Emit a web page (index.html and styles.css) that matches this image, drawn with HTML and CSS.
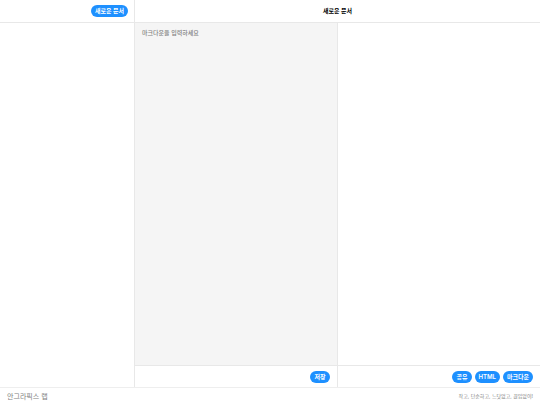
FILE: index.html
```
<!DOCTYPE html>
<html lang="ko">
<head>
    <meta charset="UTF-8">
    <meta name="viewport" content="width=device-width, initial-scale=1.0">
    <title>새로운 문서</title>
    <link rel="stylesheet" href="styles.css">
</head>
<body>
    <div class="app">
        <aside class="sidebar">
            <div class="bar bar-top bar-right">
                <button type="button" class="button">새로운 문서</button>
            </div>
        </aside>
        <main class="document">
            <header class="bar bar-top bar-center">
                <h1 class="title">새로운 문서</h1>
            </header>
            <div class="panes">
                <section class="pane pane-editor">
                    <textarea class="editor" aria-label="마크다운" placeholder="마크다운을 입력하세요"></textarea>
                    <div class="bar bar-bottom bar-right">
                        <button type="button" class="button">저장</button>
                    </div>
                </section>
                <section class="pane">
                    <div class="preview"></div>
                    <div class="bar bar-bottom bar-right">
                        <button type="button" class="button">공유</button>
                        <button type="button" class="button">HTML</button>
                        <button type="button" class="button">마크다운</button>
                    </div>
                </section>
            </div>
        </main>
    </div>
    <footer class="footer">
        <a class="brand" href="#">안그라픽스 랩</a>
        <p class="slogan">작고, 단순하고, 느닷없고, 끊임없이!</p>
    </footer>
</body>
</html>
```

FILE: styles.css
```
* {
    box-sizing: border-box;
}

body {
    display: flex;
    flex-direction: column;
    height: 100vh;
    margin: 0;
    background-color: white;
    color: black;
    font-family: Inter, "Noto Sans CJK KR", sans-serif;
    font-size: 6px;
}

.app {
    display: grid;
    grid-template-columns: 1fr 3fr;
    flex: 1;
    min-height: 0;
}

.sidebar {
    border-right: 1px solid #e8e8e8;
}

.document {
    display: flex;
    flex-direction: column;
    min-width: 0;
}

.bar {
    display: flex;
    align-items: center;
    gap: 3px;
    height: 23px;
    padding: 0 7px;
}

.sidebar .bar {
    padding: 0 6px;
}

.bar-top {
    border-bottom: 1px solid #e8e8e8;
}

.bar-bottom {
    height: 22px;
    border-top: 1px solid #e8e8e8;
}

.bar-right {
    justify-content: flex-end;
}

.bar-center {
    justify-content: center;
    padding-bottom: 2px;
}

.title {
    margin: 0;
    font-size: 6px;
    font-weight: 700;
}

.button {
    height: 12px;
    padding: 0 4px;
    border: 0;
    border-radius: 6px;
    background-color: #1e90ff;
    color: white;
    font-family: inherit;
    font-size: 6px;
    font-weight: 600;
    line-height: 12px;
    white-space: nowrap;
    cursor: pointer;
}

.panes {
    display: grid;
    grid-template-columns: 1fr 1fr;
    flex: 1;
    min-height: 0;
}

.pane {
    display: flex;
    flex-direction: column;
    min-width: 0;
}

.pane-editor {
    border-right: 1px solid #e8e8e8;
}

.editor {
    flex: 1;
    width: 100%;
    padding: 5px 7px;
    border: 0;
    outline: 0;
    border-radius: 0;
    background-color: #f5f5f5;
    font-family: inherit;
    font-size: 6px;
    font-weight: 500;
    line-height: 10px;
    resize: none;
}

.editor::placeholder {
    color: #808080;
}

.preview {
    flex: 1;
    padding: 5px 7px;
}

.footer {
    display: flex;
    align-items: center;
    justify-content: space-between;
    height: 18px;
    padding: 0 7px 2px;
    border-top: 1px solid #eeeeee;
    color: #808080;
}

.brand {
    color: inherit;
    font-size: 7px;
    text-decoration: none;
}

.slogan {
    margin: 0;
    font-size: 5px;
}
```
